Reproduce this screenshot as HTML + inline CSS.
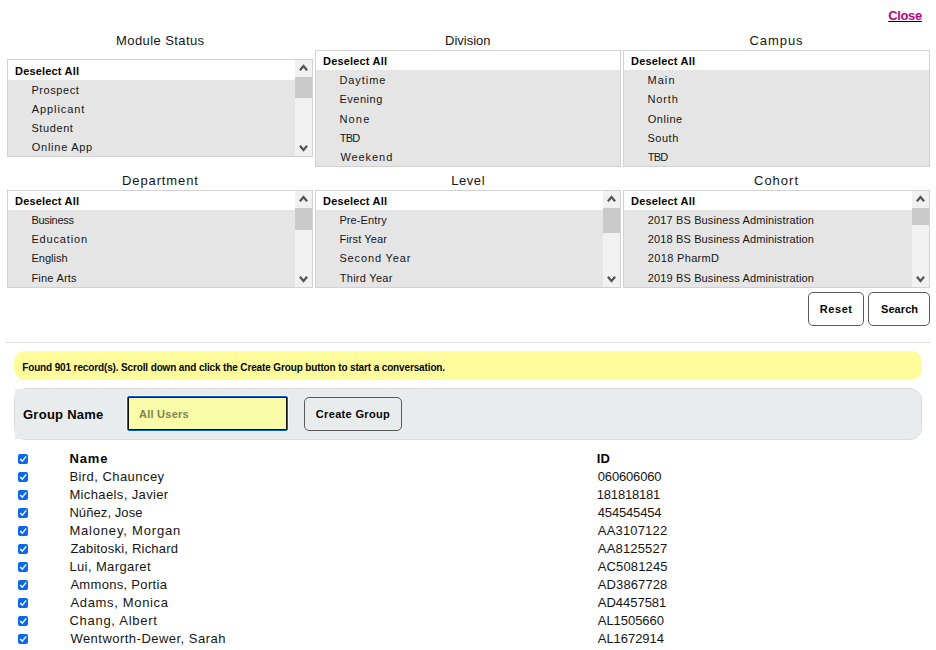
<!DOCTYPE html>
<html><head><meta charset="utf-8">
<style>
html,body{margin:0;padding:0;background:#fff;width:936px;height:650px;overflow:hidden;font-family:"Liberation Sans",sans-serif;color:#111;}
.t{position:absolute;white-space:nowrap;line-height:14px}
.a{position:absolute}
.box{position:absolute;border:1px solid #d2d2d2;background:#e5e5e5;box-sizing:border-box;width:306px}
.hdr{background:#fff}
.sb{position:absolute;width:17px;background:#f1f1f1}
.thumb{position:absolute;left:0;top:17px;width:17px;background:#c9c9c9}
.up{position:absolute;left:4px;top:4px}
.dn{position:absolute;left:4px;bottom:4px}
.btn{position:absolute;box-sizing:border-box;border:1px solid #5a5a5a;border-radius:5px;background:#fff}
.cb{position:absolute;left:18px;width:10px;height:10px;background:#0a68e9;border-radius:2px}
.cb svg{position:absolute;left:0;top:0}
#close{text-decoration:underline;text-decoration-color:#000}
</style></head><body>
<div class="box" style="left:7px;top:59px;height:98px;width:306px"><div class="hdr" style="height:20px"></div></div><div class="sb" style="left:295px;top:60px;height:96px"><div class="thumb" style="height:21px"></div><svg class="up" width="9" height="7" viewBox="0 0 9 7"><path d="M0.9 6.3 L4.5 2.1 L8.1 6.3" fill="none" stroke="#555" stroke-width="2.3"/></svg><svg class="dn" width="9" height="7" viewBox="0 0 9 7"><path d="M0.9 0.8 L4.5 4.9 L8.1 0.8" fill="none" stroke="#555" stroke-width="2.3"/></svg></div><div class="box" style="left:315px;top:50px;height:117px;width:306px"><div class="hdr" style="height:19px"></div></div><div class="box" style="left:623px;top:50px;height:117px;width:307px"><div class="hdr" style="height:19px"></div></div><div class="box" style="left:7px;top:190px;height:98px;width:306px"><div class="hdr" style="height:19px"></div></div><div class="sb" style="left:295px;top:191px;height:96px"><div class="thumb" style="height:22px"></div><svg class="up" width="9" height="7" viewBox="0 0 9 7"><path d="M0.9 6.3 L4.5 2.1 L8.1 6.3" fill="none" stroke="#555" stroke-width="2.3"/></svg><svg class="dn" width="9" height="7" viewBox="0 0 9 7"><path d="M0.9 0.8 L4.5 4.9 L8.1 0.8" fill="none" stroke="#555" stroke-width="2.3"/></svg></div><div class="box" style="left:315px;top:190px;height:98px;width:306px"><div class="hdr" style="height:19px"></div></div><div class="sb" style="left:603px;top:191px;height:96px"><div class="thumb" style="height:25px"></div><svg class="up" width="9" height="7" viewBox="0 0 9 7"><path d="M0.9 6.3 L4.5 2.1 L8.1 6.3" fill="none" stroke="#555" stroke-width="2.3"/></svg><svg class="dn" width="9" height="7" viewBox="0 0 9 7"><path d="M0.9 0.8 L4.5 4.9 L8.1 0.8" fill="none" stroke="#555" stroke-width="2.3"/></svg></div><div class="box" style="left:623px;top:190px;height:98px;width:307px"><div class="hdr" style="height:19px"></div></div><div class="sb" style="left:912px;top:191px;height:96px"><div class="thumb" style="height:17px"></div><svg class="up" width="9" height="7" viewBox="0 0 9 7"><path d="M0.9 6.3 L4.5 2.1 L8.1 6.3" fill="none" stroke="#555" stroke-width="2.3"/></svg><svg class="dn" width="9" height="7" viewBox="0 0 9 7"><path d="M0.9 0.8 L4.5 4.9 L8.1 0.8" fill="none" stroke="#555" stroke-width="2.3"/></svg></div>
<div class="btn" style="left:808px;top:292px;width:56px;height:34px"></div>
<div class="btn" style="left:868px;top:292px;width:62px;height:34px"></div>
<div class="a" style="left:6px;top:342px;width:924px;height:1px;background:#dcdcdc"></div>
<div class="a" style="left:14px;top:351px;width:908px;height:29px;border-radius:11px;background:#fffd9b"></div>
<div class="a" style="left:14px;top:388px;width:908px;height:52px;box-sizing:border-box;border:1px solid #dadcdd;border-radius:12px;background:#e9eced"></div><div class="a" style="left:15px;top:389px;width:24px;height:50px;background:#e9eced"></div>
<div class="a" style="left:126px;top:395px;width:163px;height:37px;box-sizing:border-box;background:rgba(255,255,255,0.55);padding:1px;border-radius:3px"><div style="width:161px;height:35px;box-sizing:border-box;border:1px solid #0060df;border-radius:2px"><div style="width:159px;height:33px;box-sizing:border-box;border:1px solid #111;background:#f8fba8"></div></div></div>
<div class="btn" style="left:304px;top:397px;width:98px;height:34px;background:#e9eced"></div>
<div class="cb" style="top:454px"><svg width="10" height="10" viewBox="0 0 10 10"><path d="M2.1 4.9 L4.3 7.1 L8.2 2.4" fill="none" stroke="#fff" stroke-width="1.4"/></svg></div><div class="cb" style="top:472px"><svg width="10" height="10" viewBox="0 0 10 10"><path d="M2.1 4.9 L4.3 7.1 L8.2 2.4" fill="none" stroke="#fff" stroke-width="1.4"/></svg></div><div class="cb" style="top:490px"><svg width="10" height="10" viewBox="0 0 10 10"><path d="M2.1 4.9 L4.3 7.1 L8.2 2.4" fill="none" stroke="#fff" stroke-width="1.4"/></svg></div><div class="cb" style="top:508px"><svg width="10" height="10" viewBox="0 0 10 10"><path d="M2.1 4.9 L4.3 7.1 L8.2 2.4" fill="none" stroke="#fff" stroke-width="1.4"/></svg></div><div class="cb" style="top:526px"><svg width="10" height="10" viewBox="0 0 10 10"><path d="M2.1 4.9 L4.3 7.1 L8.2 2.4" fill="none" stroke="#fff" stroke-width="1.4"/></svg></div><div class="cb" style="top:544px"><svg width="10" height="10" viewBox="0 0 10 10"><path d="M2.1 4.9 L4.3 7.1 L8.2 2.4" fill="none" stroke="#fff" stroke-width="1.4"/></svg></div><div class="cb" style="top:562px"><svg width="10" height="10" viewBox="0 0 10 10"><path d="M2.1 4.9 L4.3 7.1 L8.2 2.4" fill="none" stroke="#fff" stroke-width="1.4"/></svg></div><div class="cb" style="top:580px"><svg width="10" height="10" viewBox="0 0 10 10"><path d="M2.1 4.9 L4.3 7.1 L8.2 2.4" fill="none" stroke="#fff" stroke-width="1.4"/></svg></div><div class="cb" style="top:598px"><svg width="10" height="10" viewBox="0 0 10 10"><path d="M2.1 4.9 L4.3 7.1 L8.2 2.4" fill="none" stroke="#fff" stroke-width="1.4"/></svg></div><div class="cb" style="top:616px"><svg width="10" height="10" viewBox="0 0 10 10"><path d="M2.1 4.9 L4.3 7.1 L8.2 2.4" fill="none" stroke="#fff" stroke-width="1.4"/></svg></div><div class="cb" style="top:634px"><svg width="10" height="10" viewBox="0 0 10 10"><path d="M2.1 4.9 L4.3 7.1 L8.2 2.4" fill="none" stroke="#fff" stroke-width="1.4"/></svg></div>
<span class="t" id="close" style="left:888.2px;top:9px;font-size:13px;font-weight:bold;color:#c0007f;letter-spacing:-0.345px;">Close</span><span class="t" id="t_ms" style="left:116px;top:34px;font-size:13px;font-weight:normal;color:#151515;letter-spacing:0.417px;">Module Status</span><span class="t" id="t_div" style="left:445px;top:34px;font-size:13px;font-weight:normal;color:#151515;letter-spacing:0.000px;">Division</span><span class="t" id="t_cam" style="left:749.4px;top:34px;font-size:13px;font-weight:normal;color:#151515;letter-spacing:0.960px;">Campus</span><span class="t" id="t_dep" style="left:122.0px;top:174px;font-size:13px;font-weight:normal;color:#151515;letter-spacing:0.888px;">Department</span><span class="t" id="t_lev" style="left:451.2px;top:174px;font-size:13px;font-weight:normal;color:#151515;letter-spacing:0.575px;">Level</span><span class="t" id="t_coh" style="left:754px;top:174px;font-size:13px;font-weight:normal;color:#151515;letter-spacing:1.000px;">Cohort</span><span class="t" id="ms_h" style="left:15px;top:64px;font-size:11px;font-weight:bold;color:#050505;letter-spacing:0.182px;">Deselect All</span><span class="t" id="ms_0" style="left:31.4px;top:83px;font-size:11px;font-weight:normal;color:#151515;letter-spacing:0.565px;">Prospect</span><span class="t" id="ms_1" style="left:31.8px;top:102px;font-size:11px;font-weight:normal;color:#151515;letter-spacing:0.900px;">Applicant</span><span class="t" id="ms_2" style="left:31.4px;top:121px;font-size:11px;font-weight:normal;color:#151515;letter-spacing:0.599px;">Student</span><span class="t" id="ms_3" style="left:31.8px;top:140px;font-size:11px;font-weight:normal;color:#151515;letter-spacing:0.735px;">Online App</span><span class="t" id="dv_h" style="left:323px;top:54px;font-size:11px;font-weight:bold;color:#050505;letter-spacing:0.182px;">Deselect All</span><span class="t" id="dv_0" style="left:339.4px;top:73px;font-size:11px;font-weight:normal;color:#151515;letter-spacing:0.939px;">Daytime</span><span class="t" id="dv_1" style="left:339.4px;top:92px;font-size:11px;font-weight:normal;color:#151515;letter-spacing:0.534px;">Evening</span><span class="t" id="dv_2" style="left:339.4px;top:112px;font-size:11px;font-weight:normal;color:#151515;letter-spacing:1.201px;">None</span><span class="t" id="dv_3" style="left:339.8px;top:131px;font-size:11px;font-weight:normal;color:#151515;letter-spacing:-0.800px;">TBD</span><span class="t" id="dv_4" style="left:340.4px;top:150px;font-size:11px;font-weight:normal;color:#151515;letter-spacing:0.932px;">Weekend</span><span class="t" id="cp_h" style="left:631px;top:54px;font-size:11px;font-weight:bold;color:#050505;letter-spacing:0.182px;">Deselect All</span><span class="t" id="cp_0" style="left:647.4px;top:73px;font-size:11px;font-weight:normal;color:#151515;letter-spacing:1.100px;">Main</span><span class="t" id="cp_1" style="left:647.4px;top:92px;font-size:11px;font-weight:normal;color:#151515;letter-spacing:0.900px;">North</span><span class="t" id="cp_2" style="left:647.8px;top:112px;font-size:11px;font-weight:normal;color:#151515;letter-spacing:0.520px;">Online</span><span class="t" id="cp_3" style="left:647.4px;top:131px;font-size:11px;font-weight:normal;color:#151515;letter-spacing:0.528px;">South</span><span class="t" id="cp_4" style="left:647.8px;top:150px;font-size:11px;font-weight:normal;color:#151515;letter-spacing:-0.800px;">TBD</span><span class="t" id="dp_h" style="left:15px;top:194px;font-size:11px;font-weight:bold;color:#050505;letter-spacing:0.182px;">Deselect All</span><span class="t" id="dp_0" style="left:31.4px;top:213px;font-size:11px;font-weight:normal;color:#151515;letter-spacing:-0.293px;">Business</span><span class="t" id="dp_1" style="left:31.4px;top:232px;font-size:11px;font-weight:normal;color:#151515;letter-spacing:0.853px;">Education</span><span class="t" id="dp_2" style="left:31.4px;top:251px;font-size:11px;font-weight:normal;color:#151515;letter-spacing:0.034px;">English</span><span class="t" id="dp_3" style="left:31.4px;top:271px;font-size:11px;font-weight:normal;color:#151515;letter-spacing:0.228px;">Fine Arts</span><span class="t" id="lv_h" style="left:323px;top:194px;font-size:11px;font-weight:bold;color:#050505;letter-spacing:0.182px;">Deselect All</span><span class="t" id="lv_0" style="left:339.4px;top:213px;font-size:11px;font-weight:normal;color:#151515;letter-spacing:0.103px;">Pre-Entry</span><span class="t" id="lv_1" style="left:339.4px;top:232px;font-size:11px;font-weight:normal;color:#151515;letter-spacing:0.111px;">First Year</span><span class="t" id="lv_2" style="left:339.4px;top:251px;font-size:11px;font-weight:normal;color:#151515;letter-spacing:0.860px;">Second Year</span><span class="t" id="lv_3" style="left:339.8px;top:271px;font-size:11px;font-weight:normal;color:#151515;letter-spacing:0.265px;">Third Year</span><span class="t" id="ch_h" style="left:631px;top:194px;font-size:11px;font-weight:bold;color:#050505;letter-spacing:0.182px;">Deselect All</span><span class="t" id="ch_0" style="left:647.8px;top:213px;font-size:11px;font-weight:normal;color:#151515;letter-spacing:0.134px;">2017 BS Business Administration</span><span class="t" id="ch_1" style="left:647.8px;top:232px;font-size:11px;font-weight:normal;color:#151515;letter-spacing:0.134px;">2018 BS Business Administration</span><span class="t" id="ch_2" style="left:647.8px;top:251px;font-size:11px;font-weight:normal;color:#151515;letter-spacing:0.338px;">2018 PharmD</span><span class="t" id="ch_3" style="left:647.8px;top:271px;font-size:11px;font-weight:normal;color:#151515;letter-spacing:0.134px;">2019 BS Business Administration</span><span class="t" id="reset" style="left:819.8px;top:302px;font-size:11px;font-weight:bold;color:#050505;letter-spacing:0.550px;">Reset</span><span class="t" id="search" style="left:881px;top:302px;font-size:11px;font-weight:bold;color:#050505;letter-spacing:0.080px;">Search</span><span class="t" id="found" style="left:22.2px;top:361px;font-size:10px;font-weight:bold;color:#050505;letter-spacing:-0.135px;">Found 901 record(s). Scroll down and click the Create Group button to start a conversation.</span><span class="t" id="gname" style="left:23.0px;top:408px;font-size:13px;font-weight:bold;color:#050505;letter-spacing:0.255px;">Group Name</span><span class="t" id="allusers" style="left:139px;top:407px;font-size:11px;font-weight:bold;color:#83834f;letter-spacing:0.247px;">All Users</span><span class="t" id="create" style="left:315.8px;top:407px;font-size:11px;font-weight:bold;color:#050505;letter-spacing:0.336px;">Create Group</span><span class="t" id="h_name" style="left:69.4px;top:452px;font-size:13px;font-weight:bold;color:#050505;letter-spacing:0.933px;">Name</span><span class="t" id="h_id" style="left:596.8px;top:452px;font-size:13px;font-weight:bold;color:#050505;letter-spacing:0.200px;">ID</span><span class="t" id="n0" style="left:69.4px;top:470px;font-size:13px;font-weight:normal;color:#151515;letter-spacing:0.446px;">Bird, Chauncey</span><span class="t" id="i0" style="left:597.8px;top:470px;font-size:13px;font-weight:normal;color:#151515;letter-spacing:-0.175px;">060606060</span><span class="t" id="n1" style="left:69.4px;top:488px;font-size:13px;font-weight:normal;color:#151515;letter-spacing:0.374px;">Michaels, Javier</span><span class="t" id="i1" style="left:596.8px;top:488px;font-size:13px;font-weight:normal;color:#151515;letter-spacing:-0.200px;">181818181</span><span class="t" id="n2" style="left:69.4px;top:506px;font-size:13px;font-weight:normal;color:#151515;letter-spacing:0.082px;">Núñez, Jose</span><span class="t" id="i2" style="left:597.8px;top:506px;font-size:13px;font-weight:normal;color:#151515;letter-spacing:-0.175px;">454545454</span><span class="t" id="n3" style="left:69.4px;top:524px;font-size:13px;font-weight:normal;color:#151515;letter-spacing:0.814px;">Maloney, Morgan</span><span class="t" id="i3" style="left:597.8px;top:524px;font-size:13px;font-weight:normal;color:#151515;letter-spacing:0.170px;">AA3107122</span><span class="t" id="n4" style="left:70.4px;top:542px;font-size:13px;font-weight:normal;color:#151515;letter-spacing:0.210px;">Zabitoski, Richard</span><span class="t" id="i4" style="left:597.8px;top:542px;font-size:13px;font-weight:normal;color:#151515;letter-spacing:0.170px;">AA8125527</span><span class="t" id="n5" style="left:69.4px;top:560px;font-size:13px;font-weight:normal;color:#151515;letter-spacing:0.384px;">Lui, Margaret</span><span class="t" id="i5" style="left:597.8px;top:560px;font-size:13px;font-weight:normal;color:#151515;letter-spacing:0.128px;">AC5081245</span><span class="t" id="n6" style="left:70.4px;top:578px;font-size:13px;font-weight:normal;color:#151515;letter-spacing:0.308px;">Ammons, Portia</span><span class="t" id="i6" style="left:597.8px;top:578px;font-size:13px;font-weight:normal;color:#151515;letter-spacing:0.100px;">AD3867728</span><span class="t" id="n7" style="left:70.4px;top:596px;font-size:13px;font-weight:normal;color:#151515;letter-spacing:0.667px;">Adams, Monica</span><span class="t" id="i7" style="left:597.8px;top:596px;font-size:13px;font-weight:normal;color:#151515;letter-spacing:-0.025px;">AD4457581</span><span class="t" id="n8" style="left:69.4px;top:614px;font-size:13px;font-weight:normal;color:#151515;letter-spacing:0.733px;">Chang, Albert</span><span class="t" id="i8" style="left:597.8px;top:614px;font-size:13px;font-weight:normal;color:#151515;letter-spacing:-0.050px;">AL1505660</span><span class="t" id="n9" style="left:70.4px;top:632px;font-size:13px;font-weight:normal;color:#151515;letter-spacing:0.476px;">Wentworth-Dewer, Sarah</span><span class="t" id="i9" style="left:597.8px;top:632px;font-size:13px;font-weight:normal;color:#151515;letter-spacing:-0.050px;">AL1672914</span>
</body></html>
